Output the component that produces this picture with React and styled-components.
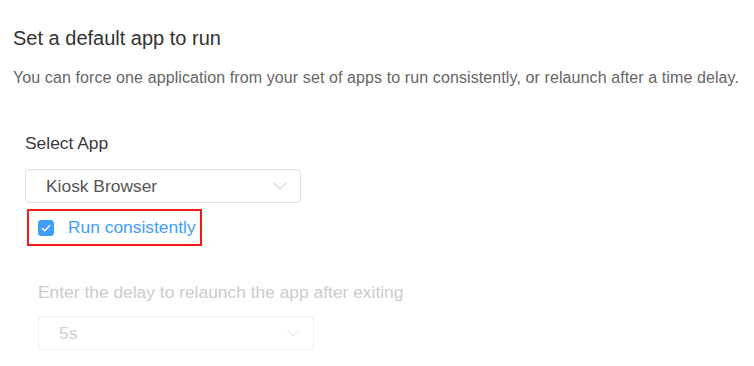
import React, { useState } from 'react'
import styled, { createGlobalStyle } from 'styled-components'

const GlobalStyle = createGlobalStyle`
  body {
    margin: 0;
    background: #fff;
    font-family: 'Liberation Sans', Arial, sans-serif;
  }
`

const App = () => {
  const [runConsistently, setRunConsistently] = useState(true)

  return (
    <>
      <GlobalStyle />
      <Page>
        <Title>Set a default app to run</Title>
        <Description>
          You can force one application from your set of apps to run consistently, or relaunch after a time delay.
        </Description>

        <Form>
          <Label>Select App</Label>
          <Select>
            <SelectValue>Kiosk Browser</SelectValue>
            <Chevron />
          </Select>

          <CheckRow onClick={() => setRunConsistently(!runConsistently)}>
            <CheckBox checked={runConsistently}>
              {runConsistently && (
                <svg width='10' height='8' viewBox='0 0 10 8'>
                  <path d='M1 4.2 L3.8 6.8 L9 1.2' fill='none' stroke='#fff' strokeWidth='1.3' />
                </svg>
              )}
            </CheckBox>
            <CheckText>Run consistently</CheckText>
          </CheckRow>

          <DelayGroup>
            <Label disabled>Enter the delay to relaunch the app after exiting</Label>
            <Select disabled>
              <SelectValue disabled>5s</SelectValue>
              <Chevron disabled />
            </Select>
          </DelayGroup>
        </Form>
      </Page>
    </>
  )
}

const Chevron = ({ disabled }) => (
  <ChevronIcon width='14' height='8' viewBox='0 0 14 8'>
    <path
      d='M0.8 0.8 L7 6.8 L13.2 0.8'
      fill='none'
      stroke={disabled ? '#e8eaee' : '#c8cbd2'}
      strokeWidth='1.1'
    />
  </ChevronIcon>
)

const Page = styled.div`
  padding: 24px 13px;
`

const Title = styled.h2`
  margin: 0;
  font-size: 20px;
  line-height: 28px;
  font-weight: normal;
  color: #333;
`

const Description = styled.p`
  margin: 14px 0 0;
  font-size: 16px;
  line-height: 24px;
  letter-spacing: 0.1px;
  color: #666;
  white-space: nowrap;
`

const Form = styled.div`
  display: flex;
  flex-direction: column;
  align-items: flex-start;
  padding-left: 12px;
  margin-top: 41px;
`

const Label = styled.div`
  font-size: 17.4px;
  line-height: 24px;
  color: ${(p) => (p.disabled ? '#cccccc' : '#3a3a3a')};
`

const Select = styled.div`
  box-sizing: border-box;
  width: 276px;
  height: 34px;
  margin-top: 14px;
  padding: 0 13px 0 20px;
  display: flex;
  align-items: center;
  justify-content: space-between;
  border: 1px solid ${(p) => (p.disabled ? '#eef0f3' : '#dcdfe6')};
  border-radius: 4px;
  background: #fff;
`

const SelectValue = styled.span`
  font-size: 17.4px;
  color: ${(p) => (p.disabled ? '#cfcfcf' : '#555')};
`

const ChevronIcon = styled.svg`
  display: block;
`

const CheckRow = styled.label`
  box-sizing: border-box;
  display: flex;
  align-items: center;
  gap: 14px;
  width: 175px;
  height: 37px;
  margin: 6px 0 0 2px;
  padding-left: 9px;
  border: 2px solid #f01c1c;
  cursor: pointer;
`

const CheckBox = styled.span`
  box-sizing: border-box;
  width: 16px;
  height: 16px;
  border-radius: 3px;
  display: flex;
  align-items: center;
  justify-content: center;
  background: ${(p) => (p.checked ? '#409eff' : '#fff')};
  border: 1px solid ${(p) => (p.checked ? '#409eff' : '#dcdfe6')};
`

const CheckText = styled.span`
  font-size: 17.4px;
  color: #409eff;
`

const DelayGroup = styled.div`
  display: flex;
  flex-direction: column;
  margin: 34px 0 0 13px;

  ${Select} {
    margin-top: 12px;
  }
`

export default App
